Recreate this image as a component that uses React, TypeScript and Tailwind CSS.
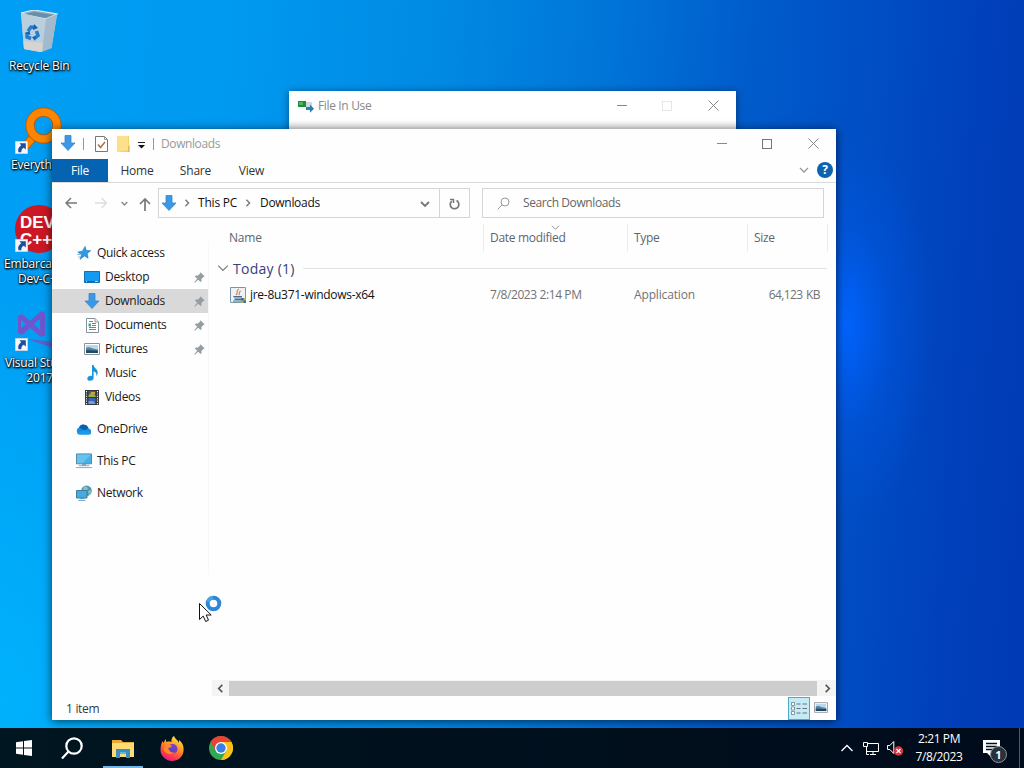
import React from 'react';

type IconProps = { className?: string };

/* ---------- Small shared icons ---------- */

const DownArrow: React.FC<IconProps> = ({ className }) => (
  <svg className={className} width="16" height="17" viewBox="0 0 16 17">
    <path d="M5 .5h6v7.500h4L8 15.500 1 8h4z" fill="#3b98e6" stroke="#3585c9" strokeWidth=".8" />
  </svg>
);

const Chevron: React.FC<{ dir: 'down' | 'right' | 'left' | 'up'; size: number; color: string; weight?: number }> = ({
  dir,
  size,
  color,
  weight = 1.5
}) => {
  const paths = {
    down: 'M1 3l4 4 4-4',
    up: 'M1 7l4-4 4 4',
    right: 'M3 1l4 4-4 4',
    left: 'M7 1L3 5l4 4'
  };
  return (
    <svg width={size} height={size} viewBox="0 0 10 10" fill="none" className="shrink-0">
      <path d={paths[dir]} stroke={color} strokeWidth={weight} />
    </svg>
  );
};

const Shortcut: React.FC = () => (
  <svg className="absolute left-[15px] top-[37px]" width="13" height="13" viewBox="0 0 13 13">
    <path d="M.5.5h12v12H.5z" fill="#f5f7fb" stroke="#c9d3df" />
    <path d="M4.500 2.300h6.300v6.300L8.700 6.700C7 7.800 6.200 8.900 6.300 11.200H3.500C2.600 8.300 3.600 6.100 6.200 4.300z" fill="#1d4f9f" />
  </svg>
);

const Pin: React.FC = () => (
  <svg width="11" height="11" viewBox="0 0 11 11" className="mr-[3px] shrink-0">
    <path d="M6.500.3l4.200 4.200-1.300.5-2 2.100.1 2.200-1 .8-2.300-2.300L.8 10.700l-.5-.5 2.900-3.400L.9 4.500l.9-1 2.200.1L6 1.600z" fill="#959ca2" />
  </svg>
);

const PictureIcon: React.FC<{ w: number; h: number }> = ({ w, h }) => (
  <svg width={w} height={h} viewBox="0 0 16 12">
    <path d="M.5.5h15v11H.5z" fill="#fff" stroke="#8a929b" />
    <path d="M2 2h12v8H2z" fill="#b8d8ef" />
    <path d="M2 5c3-2 5 1 12 1.600V10H2z" fill="#557f9d" />
    <path d="M2 7.500c4-.5 7 .3 12 .2V10H2z" fill="#25485f" />
  </svg>
);

/* ---------- Navigation pane icons ---------- */

const StarIcon = () => (
  <svg width="14" height="14" viewBox="0 0 14 14">
    <path d="M8 .4l1.300 4 4.400.3-3.500 2.700.9 4.800-3.700-2.300L3 13.400l1.500-4.600L.8 6l4.600-.8z" fill="#2e9be6" stroke="#1878bd" strokeWidth=".6" />
    <path d="M0 8.500h3M1 11h3" stroke="#5fb4ea" strokeWidth=".8" />
  </svg>
);

const DesktopIcon = () => (
  <svg width="16" height="12" viewBox="0 0 16 12">
    <path d="M.5.5h15v11H.5z" fill="#1799f0" stroke="#1770b5" />
    <path d="M1 10.500h14" stroke="#0b67ae" />
    <path d="M2 10.500h1M11 10.500h3" stroke="#d8efff" strokeWidth=".8" />
  </svg>
);

const DocumentIcon = () => (
  <svg width="13" height="15" viewBox="0 0 13 15">
    <path d="M.5.5h8.500l3.500 3.500v10.500H.5z" fill="#fff" stroke="#84929a" />
    <path d="M9 .5V4h3.500" fill="#dfe6ea" stroke="#84929a" strokeWidth=".8" />
    <path d="M3 3.500h4M6 5.500h4M6 7.500h4M3 9.500h7M3 11.500h7" stroke="#2fa0ae" />
    <path d="M2.500 5.500h2.500v3H2.500z" fill="#3bab80" />
  </svg>
);

const MusicIcon = () => (
  <svg width="11" height="16" viewBox="0 0 11 16">
    <path d="M5 0h1.600c.2 3 4 3.800 4.100 7 .1 1.600-.5 3-1.400 4 .6-2.600-.5-4.100-2.700-4.600V13c0 1.700-1.500 2.800-3.300 2.800C1.500 15.800.3 15 .3 13.700c0-1.600 1.700-2.900 3.500-2.900.5 0 .9.100 1.200.2z" fill="#1795db" />
  </svg>
);

const VideoIcon = () => (
  <svg width="14" height="15" viewBox="0 0 14 15">
    <path d="M0 0h14v15H0z" fill="#33343a" />
    <path d="M1.500 1v14M12.500 1v14" stroke="#e9e9e9" strokeWidth="1.200" strokeDasharray="1.200 1.200" />
    <path d="M3.500 1h7v6h-7z" fill="#55596a" />
    <path d="M3.500 8h7v6h-7z" fill="#3b63b2" />
    <path d="M3.500 5.500l3-3 4 3V7h-7z" fill="#9bb338" />
    <path d="M6 2h4v2H6z" fill="#dc9e35" />
    <path d="M3.500 11h5l2 3h-7z" fill="#6f9be8" />
  </svg>
);

const CloudIcon = () => (
  <svg width="16" height="11" viewBox="0 0 16 11">
    <path d="M3.700 10.500A3.600 3.600 0 013 3.600 5 5 0 0112.400 4.300 3.200 3.200 0 0113 10.500z" fill="#1490df" />
    <path d="M3 3.600A5 5 0 0112.400 4.300L8.500 6.500 3 3.600z" fill="#0862ae" />
    <path d="M1 9l7.500-2.500 6.800 2.500c-.5 1-1.300 1.500-2.300 1.500H3.700C2.500 10.500 1.500 10 1 9z" fill="#1c9ae8" />
  </svg>
);

const PcIcon = () => (
  <svg width="16" height="16" viewBox="0 0 17 16">
    <path d="M.5.500h16v10.500H.5z" fill="#48b0e4" stroke="#557f9a" />
    <path d="M1 1h15L7 10.500H1z" fill="#66c3ef" />
    <path d="M6.500 11h4v2h-4z" fill="#7ba2bb" />
    <path d="M3 13h11M0 15h17" stroke="#79a8cb" />
  </svg>
);

const NetworkIcon = () => (
  <svg width="16" height="16" viewBox="0 0 16 16">
    <circle cx="10.500" cy="5.800" r="5.300" fill="#4897c4" />
    <path d="M8 1.300l3 .7 1 2-2 2-3-1zM12 6l3-1v3l-2 2z" fill="#8bc5a3" />
    <path d="M.5 5.500h10.500v7.500H.5z" fill="#46abe0" stroke="#437a9d" />
    <path d="M4 13.500h4M2.500 15.300h7" stroke="#5e9dc6" />
  </svg>
);

/* ---------- Desktop ---------- */

const RecycleBin = () => (
  <svg className="absolute left-[20px] top-[10px]" width="38" height="43" viewBox="0 0 38 43">
    <path d="M1 3l36 2-5.500 33-12 4L4 39z" fill="#b9cad6" />
    <path d="M1 3l13-3 23 4-11 5z" fill="#8daabd" stroke="#e1ebf1" strokeWidth="1.200" />
    <path d="M4 4l10-2 19 3-8 3z" fill="#6590ad" />
    <path d="M1 3l25 6-4 33L4 39z" fill="#b9cfde" />
    <path d="M26 9l11-5-5.500 34-9.500 4z" fill="#a2bacb" />
    <path d="M3.500 31L23 33l-1 9L4 39z" fill="#d6d3d1" />
    <g fill="none" stroke="#247dcc" strokeWidth="3.500">
      <path d="M8 21l3-4 4 .5" />
      <path d="M16.500 21l1.500 4.500-3.500 3" />
      <path d="M11 28.500l-4-1.500v-4" />
    </g>
    <path d="M14 14l4 4-5 2zM16 26l-4 1 3 4zM4.500 23l5-2 1 4z" fill="#1264b2" />
  </svg>
);

const DesktopLabel: React.FC<{ children: React.ReactNode; className: string }> = ({ children, className }) => (
  <div
    className={`absolute text-center text-[12px] leading-[15px] tracking-[-0.2px] whitespace-nowrap text-white [text-shadow:0_1px_2px_#000,1px_1px_2px_#000,0_0_2px_#000] ${className}`}
  >
    {children}
  </div>
);

const DesktopIcons: React.FC = () => (
  <>
    <div className="absolute left-0 top-0 h-[80px] w-[76px]">
      <RecycleBin />
      <DesktopLabel className="left-[9px] top-[58px]">Recycle Bin</DesktopLabel>
    </div>
    <div className="absolute left-0 top-[104px] h-[80px] w-[76px]">
      <svg className="absolute left-[20px] top-[3px]" width="44" height="46" viewBox="0 0 44 46">
        <path d="M12 26L1 38l5 6 12-13" fill="#ff8500" stroke="#a75a10" />
        <circle cx="23.500" cy="18.500" r="13.500" fill="none" stroke="#a75a10" strokeWidth="9" />
        <circle cx="23.500" cy="18.500" r="13.500" fill="none" stroke="#ff8500" strokeWidth="7.500" />
      </svg>
      <Shortcut />
      <DesktopLabel className="left-[11px] top-[53px]">Everything</DesktopLabel>
    </div>
    <div className="absolute left-0 top-[202px] h-[90px] w-[76px]">
      <div className="absolute left-[15px] top-[3px] flex h-[48px] w-[48px] flex-col rounded-full bg-[#cb1824] pt-[9px] pl-[5px] font-['Liberation_Sans'] text-[17px] leading-[18px] font-bold text-white">
        <span className="h-[17px]">DEV</span>
        <span className="h-[18px]">C++</span>
      </div>
      <Shortcut />
      <DesktopLabel className="left-[4px] top-[54px]">
        Embarcadero
        <br />
        Dev-C++
      </DesktopLabel>
    </div>
    <div className="absolute left-0 top-[301px] h-[90px] w-[76px]">
      <svg className="absolute left-[15px] top-[8px]" width="50" height="46" viewBox="0 0 50 46">
        <path d="M3 7l4-2 8 7L26 2l4 2v22l-4 2-11-9-8 7-4-2V7zm3 4v8l5-4zM25 10l-6 5 6 6z" fill="#7056cc" fillRule="evenodd" />
        <path d="M12 30l38 4v9z" fill="#5c5fce" />
      </svg>
      <Shortcut />
      <DesktopLabel className="left-[5px] top-[54px]">
        Visual Studio
        <br />
        2017
      </DesktopLabel>
    </div>
  </>
);

/* ---------- Window caption buttons ---------- */

const CaptionButtons: React.FC<{ dimMax?: boolean }> = ({ dimMax }) => (
  <div className="ml-auto flex h-full items-center">
    <div className="flex w-[45px] justify-center">
      <div className="h-px w-[10px] bg-[#888]" />
    </div>
    <div className="flex w-[46px] justify-center">
      <div className={dimMax ? 'h-[10px] w-[10px] border border-[#e6e6e6]' : 'h-[10px] w-[10px] border border-[#777]'} />
    </div>
    <div className="flex w-[46px] justify-center">
      <svg width="11" height="11" viewBox="0 0 11 11">
        <path d="M.5.5l10 10M10.500.5l-10 10" stroke="#888" />
      </svg>
    </div>
  </div>
);

const FileInUseWindow: React.FC = () => (
  <div className="absolute left-[289px] top-[91px] h-[60px] w-[447px] bg-[#f3f3f3] shadow-[0_1px_8px_rgba(0,0,0,.45)]">
    <div className="flex h-[29px] items-center bg-white">
      <svg className="ml-[9px] mt-[2px]" width="16" height="13" viewBox="0 0 16 13">
        <path d="M0 1h8v6H0z" fill="#238a3c" />
        <path d="M1 2h4v3H1z" fill="#45b95e" />
        <path d="M8 2h6v5H8z" fill="#d2d9dd" />
        <path d="M8 7h4V4.500l4 4.200-4 4.100V10H8z" fill="#2381b8" />
      </svg>
      <span className="ml-[4px] text-[12px] tracking-[-0.35px] text-[#888]">File In Use</span>
      <CaptionButtons dimMax />
    </div>
    <div className="h-[8px] bg-gradient-to-b from-white to-[#eee]" />
  </div>
);

/* ---------- Explorer ---------- */

const TitleBar: React.FC = () => (
  <div className="flex h-[30px] shrink-0 items-center pb-px">
    <DownArrow className="ml-[8px]" />
    <div className="ml-[7px] h-[12px] w-px bg-[#999]" />
    <svg className="ml-[11px]" width="13" height="16" viewBox="0 0 13 16">
      <path d="M.5.5h9l3 3v12H.5z" fill="#fff" stroke="#777" />
      <path d="M9.500.5v3h3" fill="none" stroke="#999" />
      <path d="M3 8.500l2.500 3L10 6" fill="none" stroke="#a5724c" strokeWidth="1.500" />
    </svg>
    <svg className="ml-[9px]" width="14" height="16" viewBox="0 0 14 16">
      <path d="M0 0h12v9l1 1v6H0z" fill="#f3d269" />
      <path d="M0 0h11v14l-11 2z" fill="#fde18a" />
      <path d="M11.500 10v6" stroke="#e0bd5a" />
    </svg>
    <svg className="ml-[7px] mt-[2px]" width="7" height="8" viewBox="0 0 7 8">
      <path d="M0 1.500h7" stroke="#222" />
      <path d="M0 4h7L3.500 7.500z" fill="#111" />
    </svg>
    <div className="ml-[8px] h-[12px] w-px bg-[#999]" />
    <span className="ml-[7px] text-[12px] tracking-[-0.4px] text-[#999]">Downloads</span>
    <CaptionButtons />
  </div>
);

const RibbonTabs: React.FC = () => (
  <div className="flex h-[24px] shrink-0 items-center border-b border-[#dadada] text-[12px] tracking-[-0.2px] text-[#333]">
    <div className="flex h-[23px] w-[56px] items-center justify-center bg-[#0563b1] text-white">File</div>
    <div className="w-[58px] text-center">Home</div>
    <div className="w-[59px] text-center">Share</div>
    <div className="w-[53px] text-center">View</div>
    <div className="ml-auto flex items-center gap-[8px] pr-[3px] pb-px">
      <Chevron dir="down" size={10} color="#999" weight={1.3} />
      <div className="flex h-[16px] w-[16px] items-center justify-center rounded-full bg-[#0b63b2] text-[12px] leading-none font-bold text-white">
        ?
      </div>
    </div>
  </div>
);

const AddressRow: React.FC = () => (
  <div className="flex h-[40px] shrink-0 items-center text-[12px]">
    <svg className="ml-[13px] shrink-0" width="12" height="12" viewBox="0 0 12 12">
      <path d="M6 1L1 6l5 5M1 6h11" fill="none" stroke="#777" strokeWidth="1.500" />
    </svg>
    <svg className="ml-[18px] shrink-0" width="12" height="12" viewBox="0 0 12 12">
      <path d="M6.500 1l5 5-5 5M11 6H0" fill="none" stroke="#dedede" strokeWidth="1.500" />
    </svg>
    <div className="ml-[14px]">
      <Chevron dir="down" size={7} color="#888" weight={2} />
    </div>
    <svg className="ml-[11px] mt-[2px] shrink-0" width="12" height="13" viewBox="0 0 12 13">
      <path d="M1 6l5-5 5 5M6 1v12" fill="none" stroke="#777" strokeWidth="1.700" />
    </svg>
    <div className="ml-[7px] flex h-[30px] w-[312px] items-center border border-[#d5d5d5] text-[#111]">
      <DownArrow className="ml-[2px] shrink-0" />
      <div className="ml-[6px]">
        <Chevron dir="right" size={8} color="#777" weight={1.7} />
      </div>
      <span className="ml-[7px] w-[40px] whitespace-nowrap tracking-[-0.2px]">This PC</span>
      <div className="ml-[6px]">
        <Chevron dir="right" size={8} color="#777" weight={1.7} />
      </div>
      <span className="ml-[8px] tracking-[-0.3px]">Downloads</span>
      <div className="ml-auto mr-[9px] pt-[2px]">
        <Chevron dir="down" size={10} color="#777" weight={1.8} />
      </div>
      <div className="flex h-full w-[30px] items-center justify-center border-l border-[#d5d5d5] pt-[2px]">
        <svg width="11" height="12" viewBox="0 0 11 12">
          <path d="M7.500 2.600A4.300 4.300 0 112.800 3.100" fill="none" stroke="#777" strokeWidth="1.700" />
          <path d="M1 1.500h3.500V5" fill="none" stroke="#777" strokeWidth="1.500" />
        </svg>
      </div>
    </div>
    <div className="ml-[12px] flex h-[30px] w-[342px] items-center border border-[#d5d5d5]">
      <svg className="ml-[14px]" width="13" height="13" viewBox="0 0 13 13">
        <circle cx="8" cy="5" r="4" fill="none" stroke="#999" />
        <path d="M5 8L.7 12.300" stroke="#999" />
      </svg>
      <span className="ml-[13px] tracking-[-0.4px] text-[#666]">Search Downloads</span>
    </div>
  </div>
);

const NAV_ITEMS = [
  { label: 'Quick access', icon: <StarIcon />, root: true },
  { label: 'Desktop', icon: <DesktopIcon />, pinned: true },
  { label: 'Downloads', icon: <DownArrow />, pinned: true, active: true },
  { label: 'Documents', icon: <DocumentIcon />, pinned: true },
  { label: 'Pictures', icon: <PictureIcon w={16} h={12} />, pinned: true },
  { label: 'Music', icon: <MusicIcon /> },
  { label: 'Videos', icon: <VideoIcon /> },
  { label: 'OneDrive', icon: <CloudIcon />, root: true, gap: true },
  { label: 'This PC', icon: <PcIcon />, root: true, gap: true },
  { label: 'Network', icon: <NetworkIcon />, root: true, gap: true }
];

const NavPane: React.FC = () => (
  <div className="w-[160px] shrink-0 pt-[17px] text-[12px] tracking-[-0.3px] text-[#1b1b1b]">
    <div className="h-[334px] w-[157px] border-r border-[#f8f8f8]">
      {NAV_ITEMS.map((item) => (
        <div
          key={item.label}
          className={`flex h-[24px] items-center ${item.active ? 'bg-[#d9d9d9]' : ''} ${item.gap ? 'mt-[8px]' : ''} ${
            item.root ? 'pl-[23px]' : 'pl-[31px]'
          }`}
        >
          <div className="flex w-[18px] shrink-0 justify-center">{item.icon}</div>
          <span className="ml-[4px] flex-1 whitespace-nowrap">{item.label}</span>
          {item.pinned && <Pin />}
        </div>
      ))}
    </div>
  </div>
);

const FileList: React.FC = () => (
  <div className="flex min-w-0 flex-1 flex-col text-[12px] tracking-[-0.3px]">
    <div className="flex h-[28px] items-center text-[#5c6670]">
      <div className="w-[271px] shrink-0 pl-[17px] tracking-[-0.2px]">Name</div>
      <div className="relative flex h-full w-[145px] items-center border-r border-l border-[#ececec] pl-[6px]">
        Date modified
        <div className="absolute left-[67px] top-[-1px]">
          <Chevron dir="down" size={9} color="#888" weight={1} />
        </div>
      </div>
      <div className="flex h-full w-[120px] items-center border-r border-[#ececec] pl-[6px]">Type</div>
      <div className="flex h-full w-[80px] items-center border-r border-[#ececec] pl-[6px]">Size</div>
    </div>
    <div className="mt-[4px] flex h-[24px] items-center">
      <div className="ml-[5px]">
        <Chevron dir="down" size={12} color="#777" weight={0.9} />
      </div>
      <span className="ml-[4px] text-[14px] tracking-[0.25px] text-[#34417c]">Today (1)</span>
      <div className="mr-[9px] ml-[8px] h-px flex-1 bg-[#e2e2e2]" />
    </div>
    <div className="mt-[3px] flex h-[24px] items-center text-[#727272]">
      <div className="flex w-[271px] shrink-0 items-center pl-[18px] text-[#111]">
        <svg width="16" height="16" viewBox="0 0 16 16">
          <path d="M.5.5h15v15H.5z" fill="#eff2f4" stroke="#7b95a9" />
          <path d="M9 2C5 4 9 5 6 8M11 4C8 5 10 6 9 8" fill="none" stroke="#d98a5c" strokeWidth="1.300" />
          <path d="M3 9h9v1.500H4zM4 11.500h7V13H5z" fill="#426e94" />
          <path d="M3 14h9" fill="none" stroke="#48718e" />
          <path d="M11 11h5v5h-5z" fill="#2d71a5" />
          <path d="M13.500 11H16v2.500h-2.500zM11 13.500h2.500V16H11z" fill="#b9ab4e" />
        </svg>
        <span className="ml-[4px] tracking-[-0.28px] whitespace-nowrap">jre-8u371-windows-x64</span>
      </div>
      <div className="w-[145px] pl-[7px] tracking-[-0.4px]">7/8/2023 2:14 PM</div>
      <div className="w-[120px] pl-[6px] tracking-[-0.15px]">Application</div>
      <div className="w-[72px] text-right tracking-[-0.6px] [word-spacing:1px]">64,123 KB</div>
    </div>
    {/* Horizontal scrollbar */}
    <div className="mt-auto flex h-[16px] items-center bg-[#f4f4f4]">
      <div className="flex w-[17px] justify-center">
        <Chevron dir="left" size={9} color="#555" weight={1.8} />
      </div>
      <div className="h-[15px] w-[588px] bg-[#cdcdcd]" />
      <div className="flex flex-1 justify-center pl-[2px]">
        <Chevron dir="right" size={9} color="#555" weight={1.8} />
      </div>
    </div>
  </div>
);

const StatusBar: React.FC = () => (
  <div className="flex h-[24px] shrink-0 items-center text-[12px] text-[#34394d]">
    <span className="ml-[14px] pt-[2px] tracking-[-0.3px]">1 item</span>
    <div className="ml-auto flex h-[23px] w-[22px] items-center justify-center border border-[#4fabc5] bg-[#c5ebf7]">
      <svg width="17" height="13" viewBox="0 0 17 13">
        {[0, 4.5, 9].map((y) => (
          <g key={y} transform={`translate(0 ${y})`}>
            <path d="M.5.5h3v3h-3z" fill="#fff" stroke="#777f8a" strokeWidth=".8" />
            <path d="M5.500 2h4M11.500 2h4.500" stroke="#69727c" />
          </g>
        ))}
      </svg>
    </div>
    <div className="mr-[8px] ml-[4px] -mt-[2px]">
      <PictureIcon w={14} h={11} />
    </div>
  </div>
);

const ExplorerWindow: React.FC = () => (
  <div className="absolute left-[52px] top-[129px] flex h-[591px] w-[784px] flex-col bg-[#fefefe] shadow-[0_1px_9px_rgba(0,0,0,.65)]">
    <TitleBar />
    <RibbonTabs />
    <AddressRow />
    <div className="mt-px flex min-h-0 flex-1">
      <NavPane />
      <FileList />
    </div>
    <StatusBar />
  </div>
);

/* ---------- Pointer with busy ring ---------- */

const BusyPointer: React.FC = () => (
  <svg className="absolute left-[198px] top-[594px]" width="26" height="30" viewBox="0 0 26 30">
    <path d="M1.500 9.500v16l3.700-3.400 2.500 5.400 2.800-1.300-2.300-5.200h5z" fill="#fff" stroke="#111" />
    <circle cx="15.500" cy="9.500" r="5.800" fill="#fff" stroke="#2e86d6" strokeWidth="4" />
    <path d="M10 8a6 6 0 015-4.500" fill="none" stroke="#48a5e3" strokeWidth="3" />
  </svg>
);

/* ---------- Taskbar ---------- */

const FirefoxIcon = () => (
  <svg width="24" height="25" viewBox="0 0 24 25">
    <defs>
      <linearGradient id="fox" x1=".8" y1="0" x2=".3" y2="1">
        <stop stopColor="#fff04a" />
        <stop offset=".4" stopColor="#ff9b22" />
        <stop offset=".75" stopColor="#ff414c" />
        <stop offset="1" stopColor="#e31587" />
      </linearGradient>
    </defs>
    <path d="M14 0c1 3 4 4 5 7V4c4 3 5 7 4.500 11C23 21 18 25 12 25S.5 20 .5 14c0-4 1-7 2-9l1 2 2-4 1 3c2-.6 3-.6 5 0C11 4 12 1 14 0z" fill="url(#fox)" />
    <circle cx="12.500" cy="13" r="5" fill="#7540c9" />
    <path d="M5 9c3-1 5-1 7 1-1 2-3 1-4 3 3 3 7 1 8-2 1 7-6 9-11 5-2-2-1-5 0-7z" fill="#ff8926" />
    <path d="M9 11c1 2 5 3 7 0l.5 4c-2 2-5 2-6.500.5z" fill="#6540c2" />
  </svg>
);

const ChromeIcon = () => (
  <svg width="24" height="24" viewBox="0 0 24 24">
    <circle cx="12" cy="12" r="12" fill="#32a852" />
    <path d="M12 6h10.400A12 12 0 0112 24l5.200-9z" fill="#fbc116" />
    <path d="M1.600 6l5.200 9L12 6h10.400A12 12 0 001.600 6z" fill="#ea4335" />
    <circle cx="12" cy="12" r="6" fill="#fff" />
    <circle cx="12" cy="12" r="4.700" fill="#397fe8" />
  </svg>
);

const Taskbar: React.FC = () => (
  <div className="absolute bottom-0 left-0 flex h-[40px] w-full bg-gradient-to-r from-[#001620] via-[#00101d] to-[#000b1b] text-white">
    <div className="flex w-[48px] items-center justify-center">
      <svg width="16" height="16" viewBox="0 0 16 16" fill="#fff">
        <path d="M0 2.300l7-1v6.200H0zM8 1.100L16 0v7.500H8zM0 8.500h7v6.200l-7-1zM8 8.500h8V16l-8-1.100z" />
      </svg>
    </div>
    <div className="flex w-[49px] items-center justify-center">
      <svg width="23" height="23" viewBox="0 0 23 23" fill="none" stroke="#fff" strokeWidth="2.200">
        <circle cx="13" cy="9" r="7.700" />
        <path d="M7.500 14.500L1 21.500" />
      </svg>
    </div>
    <div className="flex w-[51px] items-center justify-center">
      <div className="flex h-full w-[40px] items-center justify-center border-b-2 border-[#73b6e8] pt-[2px]">
        <svg width="22" height="19" viewBox="0 0 22 19">
          <path d="M0 1h9l2 2h11v15H0z" fill="#e8aa33" />
          <path d="M0 4h22v14H0z" fill="#ffda75" />
          <path d="M4 10h14v9h-4v-4H8v4H4z" fill="#388fc4" />
          <path d="M8 13h6v2H8z" fill="#5fb7e2" />
        </svg>
      </div>
    </div>
    <div className="flex w-[48px] items-center justify-center">
      <FirefoxIcon />
    </div>
    <div className="flex w-[50px] items-center justify-center">
      <ChromeIcon />
    </div>
    <div className="ml-auto flex items-center">
      <svg width="12" height="8" viewBox="0 0 12 8">
        <path d="M.5 7L6 1.500 11.500 7" fill="none" stroke="#fff" strokeWidth="1.300" />
      </svg>
      <svg className="ml-[9px]" width="18" height="15" viewBox="0 0 18 15" fill="none" stroke="#fff">
        <path d="M6 2.500h10.500v8h-12M8 13.500h6M11 10.500v3" />
        <path d="M1.500 1.500h4v4h-4zM4.500 5.500v8H7" />
      </svg>
      <svg className="ml-[7px]" width="17" height="16" viewBox="0 0 17 16">
        <path d="M.5 5.500h2.300l4-4v12l-4-4H.5z" fill="none" stroke="#fff" />
        <circle cx="11.500" cy="11" r="4.700" fill="#d83440" />
        <path d="M9.500 9l4 4M13.500 9l-4 4" stroke="#fff" strokeWidth="1.200" />
      </svg>
    </div>
    <div className="ml-[11px] flex w-[48px] flex-col items-center justify-center text-[12px] leading-[18px] tracking-[-0.4px] whitespace-nowrap">
      <span>2:21 PM</span>
      <span>7/8/2023</span>
    </div>
    <div className="relative ml-[19px] w-[37px]">
      <svg className="absolute left-px top-[12px]" width="17" height="17" viewBox="0 0 17 17">
        <path d="M0 0h17v13H8v4l-4-4H0z" fill="#fff" />
        <path d="M3 3.500h11M3 6.500h11M3 9.500h8" stroke="#001020" strokeWidth="1.300" />
      </svg>
      <div className="absolute left-[8px] top-[18px] flex h-[17px] w-[17px] items-center justify-center rounded-full border border-[#8c969c] bg-[#28323b] text-[11px] leading-none font-bold">
        1
      </div>
    </div>
    <div className="h-full w-[5px] border-l border-[#4c5965]" />
  </div>
);

export default function App() {
  return (
    <div className="relative h-[768px] w-[1024px] overflow-hidden bg-[radial-gradient(ellipse_90px_200px_at_845px_325px,rgba(0,100,255,.95),rgba(0,90,235,.4)_50%,transparent),radial-gradient(ellipse_260px_420px_at_0px_700px,rgba(0,184,255,.75),transparent),linear-gradient(94deg,#009ff5_0%,#0099f0_22%,#0089e3_42%,#0074d8_57%,#005ccb_70%,#004dc4_82%,#0040ba_92%,#003ab4_100%)] font-['Open_Sans','Noto_Sans',sans-serif]">
      <DesktopIcons />
      <FileInUseWindow />
      <ExplorerWindow />
      <BusyPointer />
      <Taskbar />
    </div>
  );
}
